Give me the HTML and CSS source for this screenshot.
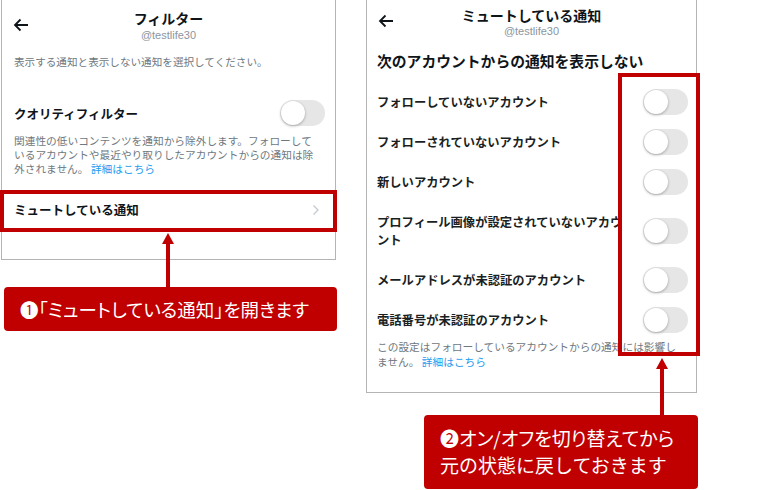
FILE: index.html
```html
<!DOCTYPE html>
<html lang="ja">
<head>
<meta charset="utf-8">
<link rel="stylesheet" href="styles.css">
</head>
<body>
<div class="stage">
  <div class="panels">
    <section class="panel panel-left">
      <header class="head">
        <svg class="back" width="16" height="14" viewBox="0 0 16 14"><path d="M15 7H2M7.5 1.5 2 7l5.5 5.5" fill="none" stroke="#0f1419" stroke-width="1.8"/></svg>
        <div class="title">フィルター</div>
        <div class="handle">@testlife30</div>
      </header>
      <p class="intro">表示する通知と表示しない通知を選択してください。</p>
      <div class="row row-quality">
        <span class="label-strong">クオリティフィルター</span>
        <span class="toggle"><span class="knob"></span></span>
      </div>
      <p class="desc">関連性の低いコンテンツを通知から除外します。フォローしているアカウントや最近やり取りしたアカウントからの通知は除外されません。 <a class="link">詳細はこちら</a></p>
      <div class="row row-link">
        <span class="label-strong">ミュートしている通知</span>
        <svg class="chev" width="8" height="12" viewBox="0 0 8 12"><path d="M1.5 1.5 6 6l-4.5 4.5" fill="none" stroke="#c4cad0" stroke-width="1.3"/></svg>
      </div>
    </section>

    <section class="panel panel-right">
      <header class="head head-right">
        <svg class="back" width="16" height="14" viewBox="0 0 16 14"><path d="M15 7H2M7.5 1.5 2 7l5.5 5.5" fill="none" stroke="#0f1419" stroke-width="1.8"/></svg>
        <div class="title">ミュートしている通知</div>
        <div class="handle">@testlife30</div>
      </header>
      <h2 class="section">次のアカウントからの通知を表示しない</h2>
      <div class="list">
        <div class="item"><span class="label">フォローしていないアカウント</span><span class="toggle"><span class="knob"></span></span></div>
        <div class="item"><span class="label">フォローされていないアカウント</span><span class="toggle"><span class="knob"></span></span></div>
        <div class="item"><span class="label">新しいアカウント</span><span class="toggle"><span class="knob"></span></span></div>
        <div class="item item-tall"><span class="label">プロフィール画像が設定されていないアカウント</span><span class="toggle"><span class="knob"></span></span></div>
        <div class="item"><span class="label">メールアドレスが未認証のアカウント</span><span class="toggle"><span class="knob"></span></span></div>
        <div class="item"><span class="label">電話番号が未認証のアカウント</span><span class="toggle"><span class="knob"></span></span></div>
      </div>
      <p class="foot">この設定はフォローしているアカウントからの通知には影響しません。 <a class="link">詳細はこちら</a></p>
    </section>
  </div>

  <div class="mark mark-1"></div>
  <div class="mark mark-2"></div>

  <div class="arrow arrow-1"><span class="tip"></span><span class="shaft"></span></div>
  <div class="arrow arrow-2"><span class="tip"></span><span class="shaft"></span></div>

  <div class="callout callout-1">❶「ミュートしている通知」を開きます</div>
  <div class="callout callout-2"><span class="line line-prop">❷オン/オフを切り替えてから</span><span class="line">元の状態に戻しておきます</span></div>
</div>
</body>
</html>
```

FILE: styles.css
```css
* { box-sizing: border-box; }
html, body { margin: 0; padding: 0; background: #fff; }
body {
  font-family: "Noto Sans CJK JP", "Liberation Sans", sans-serif;
  color: #0f1419;
  width: 770px;
  height: 490px;
  overflow: hidden;
}
.stage { position: relative; width: 770px; height: 490px; }

.panels { display: flex; align-items: flex-start; padding-left: 1px; }

.panel {
  border: 1px solid #b4b4b4;
  border-top: none;
  background: #fff;
}
.panel-left { width: 335px; height: 260px; }
.panel-right { width: 331px; height: 393px; margin-left: 30px; }

.head { position: relative; text-align: center; padding-top: 8px; height: 48px; }
.head-right { padding-top: 5px; height: 37px; }
.back { position: absolute; left: 11px; top: 18px; }
.head-right .back { left: 11px; top: 14px; }
.title { font-size: 14px; font-weight: 700; line-height: 20px; }
.handle { font-family: "Liberation Sans", sans-serif; font-size: 11px; line-height: 14px; color: #8b959e; }
.head-right .handle { line-height: 12px; }

.intro {
  margin: 7px 0 0 12px;
  font-size: 10.6px;
  line-height: 14px;
  color: #6e7880;
}

.row { display: flex; align-items: center; justify-content: space-between; }
.row-quality { margin-top: 31px; height: 26px; padding: 0 10px 0 12px; }
.label-strong { font-size: 12.5px; font-weight: 700; letter-spacing: 0; }

.desc {
  margin: 8px 0 0 12px;
  width: 305px;
  font-size: 10.7px;
  line-height: 14px;
  color: #6e7880;
}
.link { color: #1d9bf0; }

.row-link { margin-top: 15px; height: 42px; padding: 0 15px 5px 12px; }
.chev { display: block; }

.toggle {
  position: relative;
  display: inline-block;
  width: 45px;
  height: 26px;
  border-radius: 13px;
  background: #e6e6e6;
  flex: none;
}
.knob {
  position: absolute;
  left: 1px;
  top: 1px;
  width: 24px;
  height: 24px;
  border-radius: 50%;
  background: #fff;
  box-shadow: 0 1px 3px rgba(0,0,0,0.3);
}

.section {
  margin: 14px 0 0 10px;
  font-size: 14.8px;
  font-weight: 700;
  line-height: 20px;
}
.list { margin-top: 11px; }
.item {
  display: flex;
  align-items: center;
  justify-content: space-between;
  padding: 7px 8px 7px 10px;
}
.item-tall { padding-top: 11px; padding-bottom: 11px; }
.label { font-size: 12.3px; font-weight: 700; line-height: 18px; width: 255px; color: #1a1f24; }
.foot {
  margin: -1px 0 0 10px;
  width: 305px;
  font-size: 10.7px;
  line-height: 15px;
  color: #6e7880;
}

/* annotations */
.mark { position: absolute; border: 4px solid #c00000; }
.mark-1 { left: 0; top: 190px; width: 337px; height: 42px; }
.mark-2 { left: 618px; top: 73px; width: 82px; height: 283px; }

.arrow { position: absolute; display: flex; flex-direction: column; align-items: center; width: 12px; }
.arrow .tip {
  width: 0; height: 0;
  border-left: 6px solid transparent;
  border-right: 6px solid transparent;
  border-bottom: 11px solid #c00000;
}
.arrow .shaft { width: 4px; flex: 1; background: #c00000; }
.arrow-1 { left: 162px; top: 233px; height: 55px; }
.arrow-2 { left: 656px; top: 358px; height: 58px; }

.callout {
  position: absolute;
  background: #c00000;
  color: #fff;
  border-radius: 4px;
}
.callout-1 {
  left: 4px; top: 287px; width: 333px; height: 44px;
  font-size: 18.5px; line-height: 44px; padding-left: 16px;
  font-feature-settings: "palt";
}
.callout-2 {
  left: 424px; top: 415px; width: 274px; height: 74px;
  font-size: 19px; line-height: 27px; padding: 9px 0 0 16px;
}
.line { display: block; white-space: nowrap; }
.line-prop { font-feature-settings: "palt"; }
```
